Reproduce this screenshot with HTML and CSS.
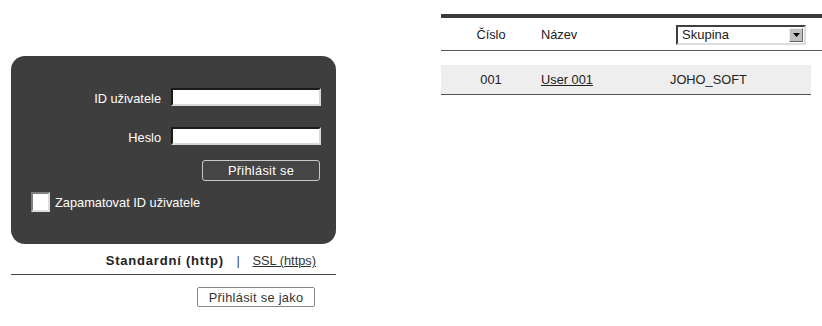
FILE: index.html
```html
<!DOCTYPE html>
<html lang="cs">
<head>
  <meta charset="UTF-8" />
  <title>Přihlášení</title>
  <link rel="stylesheet" href="styles.css">
</head>
<body>

<div class="page">
  <div class="login-col">
    <form class="login-box">
      <div class="field">
        <label for="userId">ID uživatele</label>
        <input type="text" id="userId" class="inset-input">
      </div>
      <div class="field">
        <label for="pass">Heslo</label>
        <input type="password" id="pass" class="inset-input">
      </div>
      <div class="field field-btn">
        <button type="button" class="btn-dark">Přihlásit se</button>
      </div>
      <label class="remember">
        <span class="check-box"></span>
        Zapamatovat ID uživatele
      </label>
    </form>

    <div class="protocol">
      <b>Standardní (http)</b>
      <span class="sep">|</span>
      <a href="#">SSL (https)</a>
    </div>

    <div class="as-user">
      <button type="button" class="btn-light">Přihlásit se jako</button>
    </div>
  </div>

  <div class="users-col">
    <div class="users-head">
      <span class="col-num">Číslo</span>
      <span class="col-name">Název</span>
      <div class="group-select">
        <span class="group-value">Skupina</span>
        <span class="group-arrow">
          <svg width="7" height="4" viewBox="0 0 7 4"><path d="M0 0h7L3.5 4z" fill="#000"/></svg>
        </span>
      </div>
    </div>

    <div class="users-row">
      <span class="col-num">001</span>
      <span class="col-name"><a href="#">User 001</a></span>
      <span class="col-group">JOHO_SOFT</span>
    </div>
  </div>
</div>

</body>
</html>
```

FILE: styles.css
```css
body {
  margin: 0;
  font-family: 'Liberation Sans', Arial, sans-serif;
  font-size: 12.8px;
  color: #222;
  background: #fff;
}

.page {
  display: flex;
  align-items: flex-start;
}

/* levá část - přihlášení */

.login-col {
  width: 325px;
  margin-left: 11px;
  padding-top: 56px;
}

.login-box {
  background: #3e3e3e;
  border-radius: 14px;
  height: 188px;
  box-sizing: border-box;
  padding: 32px 15px 0 20px;
  color: #fff;
  margin: 0;
}

.field {
  display: flex;
  justify-content: flex-end;
  align-items: center;
  margin-bottom: 21px;
}

.field label {
  margin-right: 10px;
  position: relative;
  top: 1px;
}

.inset-input {
  width: 150px;
  height: 18px;
  box-sizing: border-box;
  border: 2px solid;
  border-color: #1a1a1a #d8d8d8 #d8d8d8 #1a1a1a;
  background: #fff;
  padding: 0 3px;
  margin: 0;
}

.field-btn {
  margin-top: -6px;
  margin-bottom: 11px;
  padding-right: 1px;
}

.btn-dark {
  width: 118px;
  height: 21px;
  background: #454545;
  color: #fff;
  border: 1px solid #c8c8c8;
  border-radius: 3px;
  font-family: inherit;
  font-size: 12.8px;
  letter-spacing: 0.3px;
  padding: 0;
}

.remember {
  display: flex;
  align-items: center;
}

.check-box {
  width: 19px;
  height: 20px;
  box-sizing: border-box;
  background: #fff;
  border: 2px solid;
  border-color: #808080 #ddd #ddd #808080;
  margin-right: 5px;
}

.protocol {
  text-align: right;
  padding: 10px 20px 0 0;
  height: 20px;
  border-bottom: 1px solid #444;
  line-height: 14px;
}

.protocol b {
  font-size: 13px;
  letter-spacing: 0.8px;
}

.sep {
  margin: 0 9px;
  color: #444;
}

.protocol a {
  color: #333;
}

.as-user {
  text-align: right;
  padding: 12px 21px 0 0;
}

.btn-light {
  width: 118px;
  height: 20px;
  background: #fff;
  border: 1px solid #888;
  border-radius: 2px;
  color: #333;
  font-family: inherit;
  font-size: 12.8px;
  letter-spacing: 0.3px;
  padding: 0;
}

/* pravá část - seznam uživatelů */

.users-col {
  margin-left: 105px;
  width: 381px;
  padding-top: 14px;
}

.users-head {
  border-top: 4px solid #3a3a3a;
  border-bottom: 1px solid #555;
  height: 32px;
  display: flex;
  align-items: center;
}

.col-num {
  width: 100px;
  text-align: center;
}

.col-name {
  width: 129px;
}

.users-head .col-name {
  width: 135px;
}

.group-select {
  width: 130px;
  height: 20px;
  box-sizing: border-box;
  border: 2px solid;
  border-color: #404040 #ddd #ddd #404040;
  display: flex;
  align-items: center;
  background: #fff;
  margin-top: 1px;
}

.group-value {
  flex: 1;
  padding-left: 4px;
  font-size: 13px;
}

.group-arrow {
  width: 14px;
  height: 14px;
  margin-right: 1px;
  background: #c0c0c0;
  border: 1px solid;
  border-color: #eee #666 #666 #eee;
  box-sizing: border-box;
  display: flex;
  align-items: center;
  justify-content: center;
}

.users-row {
  margin-top: 14px;
  width: 370px;
  height: 29px;
  background: #eee;
  border-bottom: 1px solid #555;
  display: flex;
  align-items: center;
}

.users-row a {
  color: #222;
}
```
